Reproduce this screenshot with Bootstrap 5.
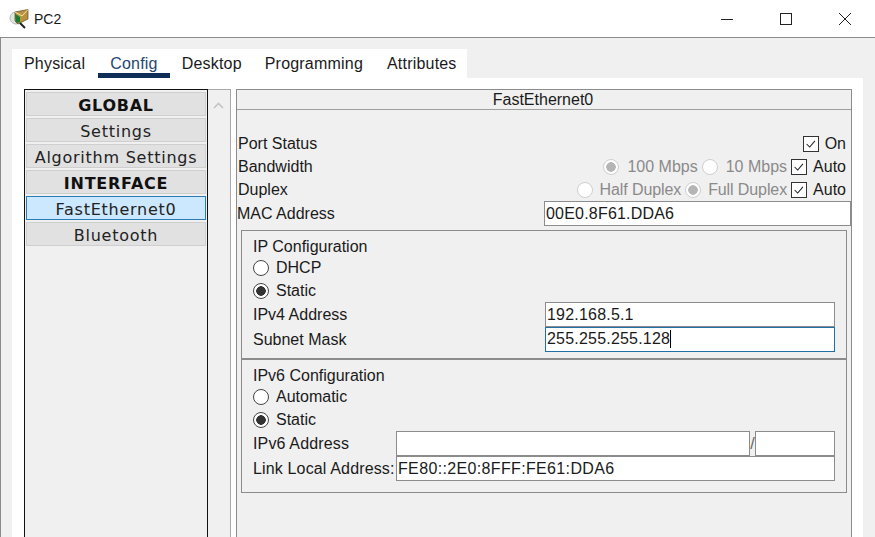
<!DOCTYPE html>
<html lang="en">
<head>
    <meta charset="UTF-8">
    <meta name="viewport" content="width=device-width, initial-scale=1.0">
    <title>PC2</title>
    <link href="https://cdn.jsdelivr.net/npm/bootstrap@5.3.0/dist/css/bootstrap.min.css" rel="stylesheet">
    <style>
        html, body { height: 100%; }
        body {
            background: #f0f0f0;
            color: #1a1a1a;
            font-family: "Liberation Sans", Arial, sans-serif;
            font-size: 16px;
            line-height: 20px;
            overflow: hidden;
        }
        .title-bar { height: 37px; background: #fff; padding: 0 1px 0 9px; }
        .title-text { font-size: 14px; margin-left: 5px; padding-top: 1px; }
        .win-btn { width: 59px; height: 37px; }
        .win-body {
            height: 500px;
            border-top: 1px solid #8c8c8c;
            border-left: 1px solid #8c8c8c;
            padding: 11px 12px 0 11px;
            overflow: hidden;
        }
        .tab-strip { background: #fff; width: 455px; height: 29px; }
        .tab-item { padding: 5px 12px 0; height: 29px; color: #1a1a1a; text-decoration: none; letter-spacing: .2px; }
        .tab-item:hover { color: #1a1a1a; }
        .tab-item:first-child { padding-right: 13px; }
        .tab-active + .tab-item { padding-right: 11px; }
        .tab-active { color: #24466f; border-bottom: 5px solid #0f2e57; }
        .tab-active:hover { color: #24466f; }
        .tab-page { background: #fff; padding: 11px 11px 0 12px; height: 470px; }
        .side-list {
            width: 184px;
            border: 1px solid #111;
            background: #f0f0f0;
            padding: 2px 1px 0 1px;
            gap: 2px;
            font-family: "DejaVu Sans", Verdana, sans-serif;
            font-size: 16px;
            letter-spacing: .75px;
        }
        .side-entry {
            height: 24px;
            background: #e1e1e1;
            border: 1px solid #cfcfcf;
            padding-top: 2px;
            line-height: 22px;
            text-align: center;
            color: #222;
            white-space: nowrap;
        }
        .side-head { font-weight: 700; color: #111; }
        .side-current { background: #cce8ff; border-color: #2b7cb3; }
        .side-scroll {
            width: 23px;
            background: #f0f0f0;
            border: 1px solid #a8a8a8;
            border-left: 0;
            padding: 5px 0 0 5px;
        }
        .detail-panel {
            width: 616px;
            margin-left: 5px;
            background: #f0f0f0;
            border: 1px solid #8c8c8c;
            border-bottom: 0;
        }
        .detail-head {
            height: 20px;
            line-height: 19px;
            padding-right: 2px;
            border-bottom: 1px solid #a0a0a0;
            text-align: center;
            margin-bottom: 22px;
        }
        .prop-row { height: 23px; line-height: 23px; padding: 0 5px 0 1px; }
        .prop-mac { height: 25px; margin-bottom: 4px; padding: 0; line-height: 25px; }
        .mac-input { width: 307px; flex: 0 0 307px; }
        .muted-opt { color: #8a8a8a; }
        .tight-opt { letter-spacing: -.1px; }
        .opt-group { gap: 7px; margin-left: 4px; }
        .wide-group { gap: 8px; }
        .check-group { gap: 6px; }
        .opt-radio, .opt-check {
            width: 16px;
            height: 16px;
            margin: 0 !important;
            flex-shrink: 0;
            box-shadow: none !important;
        }
        .opt-radio { border: 1px solid #444; background-color: #fff; }
        .opt-radio:checked {
            background-color: #fff;
            border-color: #444;
            background-image: radial-gradient(circle at center, #333 0, #333 4.5px, transparent 5px);
        }
        .opt-radio:disabled {
            opacity: 1;
            border-color: #cfcfcf;
        }
        .opt-radio:disabled:checked {
            background-color: #fff;
            background-image: radial-gradient(circle at center, #b5b5b5 0, #b5b5b5 4.5px, transparent 5px);
            border-color: #cfcfcf;
        }
        .opt-check { border: 1px solid #333; border-radius: 0 !important; background-color: #fff; }
        .opt-check:checked {
            background-color: #fff;
            border-color: #333;
            background-image: url("data:image/svg+xml,%3csvg xmlns='http://www.w3.org/2000/svg' viewBox='0 0 16 16'%3e%3cpath fill='none' stroke='%23222' stroke-width='1.2' d='M3 8l3.5 3.5L12.5 4.5'/%3e%3c/svg%3e");
        }
        .addr-box {
            border: 1px solid #8c8c8c;
            border-radius: 0;
            padding: 0 0 0 1px;
            height: 25px;
            line-height: 22px;
            font-size: 16px;
            letter-spacing: .2px;
            color: #1a1a1a;
            background: #fff;
        }
        .addr-box:focus { border-color: #8c8c8c; box-shadow: none; }
        .addr-focus { border-color: #1f6fa8; }
        .addr-spread { letter-spacing: .35px; }
        .caret-bar {
            display: inline-block;
            width: 1px;
            height: 18px;
            background: #000;
            vertical-align: -4px;
        }
        .cfg-group {
            margin: 0 4px;
            border: 1px solid #8c8c8c;
            padding: 5px 11px 6px 11px;
        }
        .cfg-lower { padding-bottom: 11px; }
        .cfg-title { height: 20px; line-height: 22px; }
        .cfg-opt { height: 23px; gap: 7px; }
        .cfg-row { height: 25px; line-height: 25px; }
        .cfg-label-wide { width: 292px; flex-shrink: 0; }
        .cfg-label-v6 { width: 143px; flex-shrink: 0; white-space: nowrap; letter-spacing: .15px; }
        .slash-mark { width: 5px; color: #666; text-align: center; flex-shrink: 0; }
        .prefix-box { width: 80px; flex-shrink: 0; }
        .addr-long { width: 354px; flex-shrink: 0; }
    </style>
</head>
<body>

<div class="title-bar d-flex align-items-center">
    <svg width="20" height="20" viewBox="0 0 20 20">
        <circle cx="7" cy="9" r="6" fill="#dfe5df" stroke="#b5b5b5"/>
        <path d="M6 3 L19 0.5 L19 10 L9 15 L6 12 Z" fill="#b8923f" stroke="#5a4a20" stroke-width=".7"/>
        <path d="M6 3 L13 7 L19 0.5" fill="none" stroke="#f3e2a8" stroke-width="1"/>
        <path d="M6 5 L11 8 L11 13 L7 14 Z" fill="#1c7a2e"/>
        <path d="M11 14 L16 19" stroke="#222" stroke-width="2"/>
    </svg>
    <span class="title-text">PC2</span>
    <div class="d-flex ms-auto">
        <div class="win-btn d-flex align-items-center justify-content-center">
            <svg width="12" height="12" viewBox="0 0 12 12"><path d="M0 6.5H12" stroke="#222"/></svg>
        </div>
        <div class="win-btn d-flex align-items-center justify-content-center">
            <svg width="12" height="12" viewBox="0 0 12 12"><rect x=".5" y=".5" width="11" height="11" fill="none" stroke="#222"/></svg>
        </div>
        <div class="win-btn d-flex align-items-center justify-content-center">
            <svg width="12" height="12" viewBox="0 0 12 12"><path d="M0 0L12 12M12 0L0 12" stroke="#222"/></svg>
        </div>
    </div>
</div>

<div class="win-body">
    <div class="tab-strip d-flex">
        <a class="tab-item" href="#">Physical</a>
        <a class="tab-item tab-active" href="#">Config</a>
        <a class="tab-item" href="#">Desktop</a>
        <a class="tab-item" href="#">Programming</a>
        <a class="tab-item" href="#">Attributes</a>
    </div>
    <div class="tab-page d-flex">
        <div class="side-list d-flex flex-column">
            <div class="side-entry side-head">GLOBAL</div>
            <div class="side-entry">Settings</div>
            <div class="side-entry">Algorithm Settings</div>
            <div class="side-entry side-head">INTERFACE</div>
            <div class="side-entry side-current">FastEthernet0</div>
            <div class="side-entry">Bluetooth</div>
        </div>
        <div class="side-scroll">
            <svg width="11" height="7" viewBox="0 0 11 7"><path d="M1 6L5.5 1.5L10 6" fill="none" stroke="#c4c4c4" stroke-width="1.6"/></svg>
        </div>
        <div class="detail-panel">
            <div class="detail-head">FastEthernet0</div>

            <div class="prop-row d-flex align-items-center">
                <span>Port Status</span>
                <div class="d-flex align-items-center ms-auto opt-group check-group">
                    <input class="form-check-input opt-check" type="checkbox" checked>
                    <span>On</span>
                </div>
            </div>
            <div class="prop-row d-flex align-items-center">
                <span>Bandwidth</span>
                <div class="d-flex align-items-center ms-auto opt-group wide-group">
                    <input class="form-check-input opt-radio" type="radio" name="bw" checked disabled>
                    <span class="muted-opt">100 Mbps</span>
                </div>
                <div class="d-flex align-items-center opt-group wide-group">
                    <input class="form-check-input opt-radio" type="radio" name="bw" disabled>
                    <span class="muted-opt">10 Mbps</span>
                </div>
                <div class="d-flex align-items-center opt-group check-group">
                    <input class="form-check-input opt-check" type="checkbox" checked>
                    <span>Auto</span>
                </div>
            </div>
            <div class="prop-row d-flex align-items-center">
                <span>Duplex</span>
                <div class="d-flex align-items-center ms-auto opt-group">
                    <input class="form-check-input opt-radio" type="radio" name="dx" disabled>
                    <span class="muted-opt tight-opt">Half Duplex</span>
                </div>
                <div class="d-flex align-items-center opt-group">
                    <input class="form-check-input opt-radio" type="radio" name="dx" checked disabled>
                    <span class="muted-opt tight-opt">Full Duplex</span>
                </div>
                <div class="d-flex align-items-center opt-group check-group">
                    <input class="form-check-input opt-check" type="checkbox" checked>
                    <span>Auto</span>
                </div>
            </div>
            <div class="prop-row prop-mac d-flex align-items-center">
                <span>MAC Address</span>
                <input class="form-control addr-box ms-auto mac-input" type="text" value="00E0.8F61.DDA6">
            </div>

            <div class="cfg-group">
                <div class="cfg-title">IP Configuration</div>
                <div class="cfg-opt d-flex align-items-center">
                    <input class="form-check-input opt-radio" type="radio" name="ip4">
                    <span>DHCP</span>
                </div>
                <div class="cfg-opt d-flex align-items-center">
                    <input class="form-check-input opt-radio" type="radio" name="ip4" checked>
                    <span>Static</span>
                </div>
                <div class="cfg-row d-flex">
                    <span class="cfg-label-wide">IPv4 Address</span>
                    <input class="form-control addr-box" type="text" value="192.168.5.1">
                </div>
                <div class="cfg-row d-flex">
                    <span class="cfg-label-wide">Subnet Mask</span>
                    <div class="form-control addr-box addr-focus">255.255.255.128<span class="caret-bar"></span></div>
                </div>
            </div>

            <div class="cfg-group cfg-lower">
                <div class="cfg-title">IPv6 Configuration</div>
                <div class="cfg-opt d-flex align-items-center">
                    <input class="form-check-input opt-radio" type="radio" name="ip6">
                    <span>Automatic</span>
                </div>
                <div class="cfg-opt d-flex align-items-center">
                    <input class="form-check-input opt-radio" type="radio" name="ip6" checked>
                    <span>Static</span>
                </div>
                <div class="cfg-row d-flex">
                    <span class="cfg-label-v6">IPv6 Address</span>
                    <input class="form-control addr-box addr-long" type="text">
                    <span class="slash-mark">/</span>
                    <input class="form-control addr-box prefix-box" type="text">
                </div>
                <div class="cfg-row d-flex">
                    <span class="cfg-label-v6">Link Local Address:</span>
                    <input class="form-control addr-box addr-spread" type="text" value="FE80::2E0:8FFF:FE61:DDA6">
                </div>
            </div>
        </div>
    </div>
</div>

<script src="https://cdn.jsdelivr.net/npm/bootstrap@5.3.0/dist/js/bootstrap.bundle.min.js"></script>
</body>
</html>
